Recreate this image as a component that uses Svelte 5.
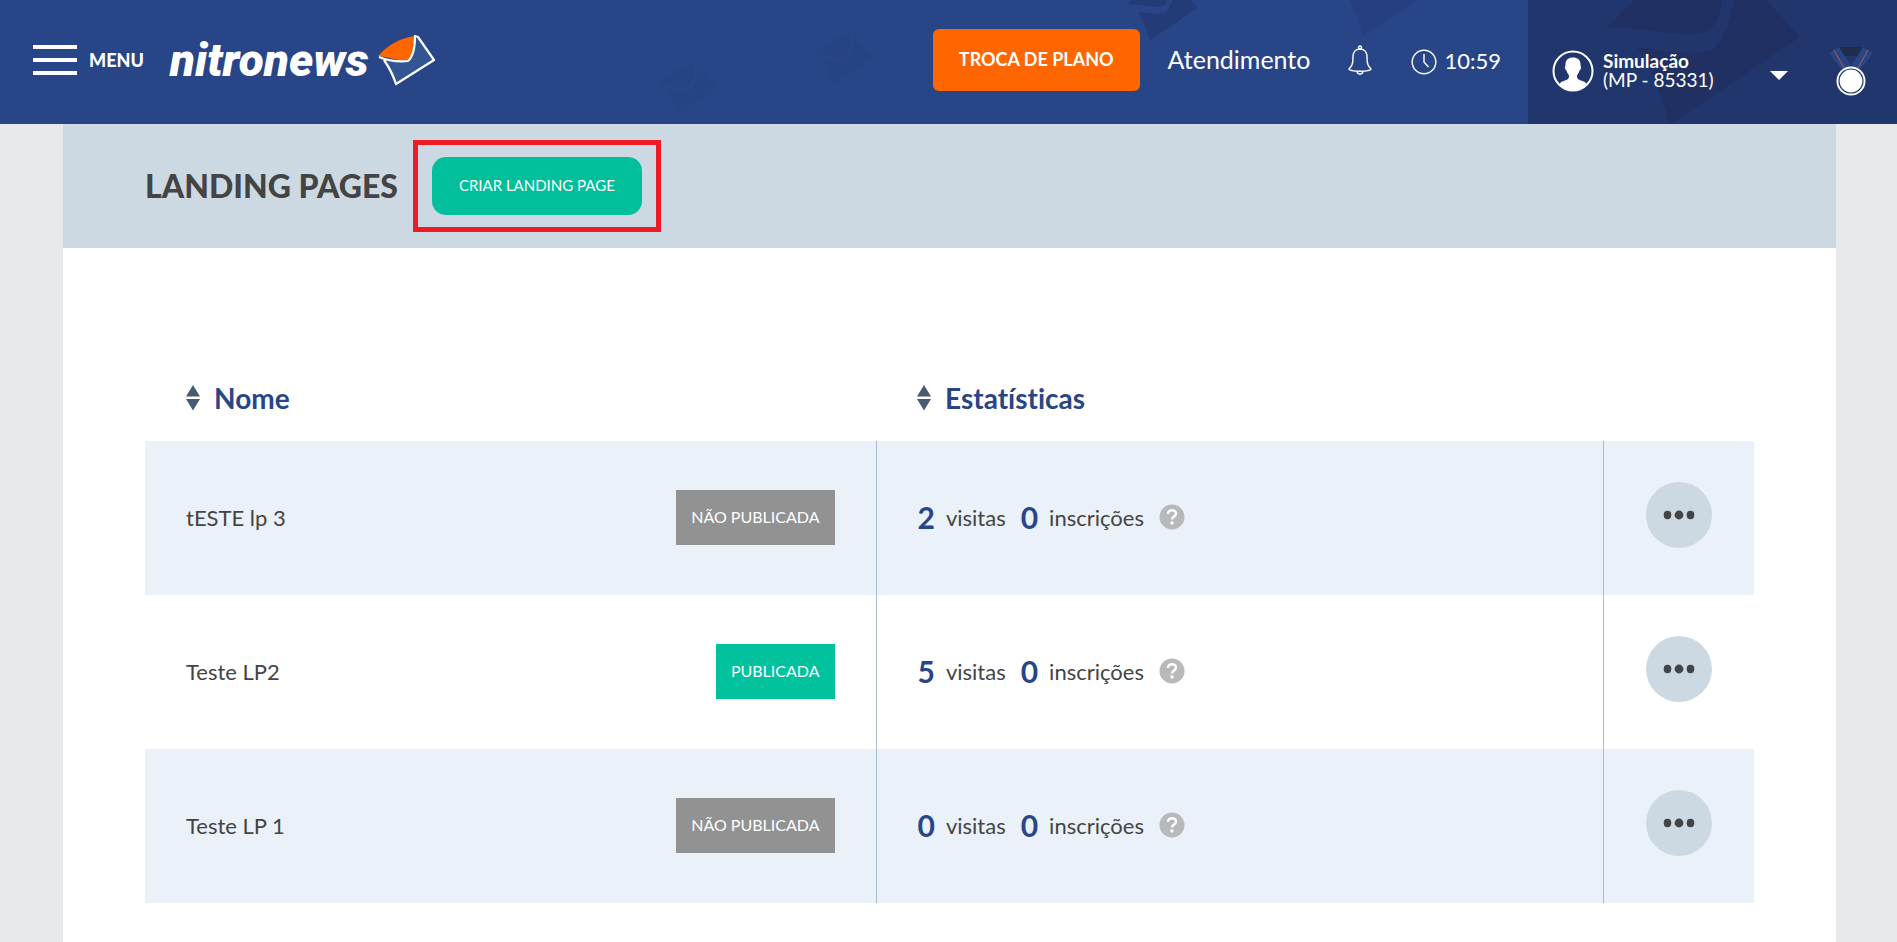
<script>
  const pages = [
    { name: 'tESTE lp 3', published: false, visits: 2, signups: 0 },
    { name: 'Teste LP2', published: true, visits: 5, signups: 0 },
    { name: 'Teste LP 1', published: false, visits: 0, signups: 0 }
  ];
</script>

{#snippet sortIcon()}
  <svg class="sort" viewBox="0 0 14 26" aria-hidden="true">
    <path d="M7 0l7 11.500H0zM7 25.500l7-11.500H0z" fill="#475c73" />
  </svg>
{/snippet}

<header class="topbar">
  <svg class="pattern" aria-hidden="true">
    <defs>
      <g id="envelope">
        <path d="M0 21C9 10 20 3 36 0c-1 9 0 18-5 22-6 3-18-1-31-1z" />
        <path d="M9 27c8 1 16 3 23 1 6-5 6-14 9-24l18 20-40 27C17 43 14 35 9 27z" />
      </g>
    </defs>
    <use href="#envelope" transform="translate(658 64)" fill="#243e7e" opacity=".25" />
    <use href="#envelope" transform="translate(814 34)" fill="#243e7e" opacity=".25" />
    <use href="#envelope" transform="translate(1127 -21) scale(1.2)" fill="#233c78" />
    <use href="#envelope" transform="translate(1327 -61) scale(1.9)" fill="#263f80" />
  </svg>

  <div class="brand">
    <button class="menu">
      <span class="bars"><i></i><i></i><i></i></span>
      MENU
    </button>
    <a class="logo" href="#inicio">
      <span>nitronews</span>
      <svg width="58" height="51" viewBox="0 0 58 51" aria-hidden="true">
        <path d="M3 24c5 8 11 15 15 25L56 24 39 2c-3 9-4 20-10 24-8 1-17-1-26-2z" fill="#335592" />
        <path d="M0 21C10 10 22 3 37 1c0 9-2 18-6 24-9 2-20-3-31-4z" fill="#f60" />
        <path d="M1 22c10 4 20 5 29 4 6-5 7-15 7-25l3 1 16 23-38 24C15 40 11 32 6 25" fill="none" stroke="#fff" stroke-width="2.200" stroke-linejoin="round" />
      </svg>
    </a>
  </div>

  <nav class="tools">
    <button class="plan">TROCA DE PLANO</button>
    <a class="support" href="#atendimento">Atendimento</a>
    <button class="bell" aria-label="Notificações">
      <svg width="24" height="30" viewBox="0 0 24 30" fill="none" stroke="#fff" stroke-width="1.400">
        <circle cx="12" cy="2.500" r="1.500" />
        <path d="M12 4c-5 0-7 4-7 8 0 7-1 9-4 12 1 3 21 3 22 0-3-3-4-5-4-12 0-4-2-8-7-8z" />
        <path d="M9 26c0 4 6 4 6 0" />
      </svg>
    </button>
    <span class="time">
      <svg width="26" height="26" viewBox="0 0 26 26" fill="none" stroke="#fff" stroke-width="1.400">
        <circle cx="13" cy="13" r="11.800" />
        <path d="M13 5v8l4.500 5" />
      </svg>
      <span>10:59</span>
    </span>
  </nav>

  <div class="account">
    <svg class="pattern" aria-hidden="true">
      <use href="#envelope" transform="translate(80 -41) scale(3.250)" fill="#203063" />
    </svg>
    <button class="user">
      <svg width="42" height="42" viewBox="0 0 42 42" aria-hidden="true">
        <circle cx="21" cy="21" r="19.500" fill="none" stroke="#fff" stroke-width="2" />
        <path d="M21 7.500c-5 0-8 3-7.500 8-1 1-.5 4 1 5 1 3 2 4 2.500 5 .3 3-1 4-4 5-3 .8-5 2-6 4a19 19 0 0 0 28 0c-1-2-3-3.200-6-4-3-1-4.300-2-4-5 .5-1 1.500-2 2.500-5 1.500-1 2-4 1-5 .5-5-2.500-8-7.500-8z" fill="#fff" />
      </svg>
      <span class="who"><b>Simulação</b><span>(MP - 85331)</span></span>
      <svg class="caret" width="18" height="9" viewBox="0 0 18 9" aria-hidden="true"><path d="M0 0h18L9 9z" fill="#fff" /></svg>
    </button>
    <svg class="medal" width="44" height="49" viewBox="0 0 44 49" aria-hidden="true">
      <path d="M9 0h26l-5 9H14z" fill="#1f2c4c" />
      <path d="M0 6l10-6 12 19-8 5zM44 6L34 0 22 19l8 5z" fill="#284587" />
      <path d="M5 3l10 18M39 3L29 21" stroke="#9c5549" stroke-width="1.200" />
      <circle cx="22" cy="34" r="14.500" fill="#fff" />
      <circle cx="22" cy="34" r="12" fill="none" stroke="#20366d" stroke-width="1.200" />
    </svg>
  </div>
</header>

<main>
  <div class="titlebar">
    <h1>LANDING PAGES</h1>
    <div class="highlight"><button class="create">CRIAR LANDING PAGE</button></div>
  </div>

  <div class="content">
    <table>
      <colgroup><col class="c-name" /><col /><col class="c-actions" /></colgroup>
      <thead>
        <tr>
          <th><button class="head">{@render sortIcon()}Nome</button></th>
          <th><button class="head">{@render sortIcon()}Estatísticas</button></th>
          <td></td>
        </tr>
      </thead>
      <tbody>
        {#each pages as page}
          <tr>
            <td>
              <div class="name">
                <span>{page.name}</span>
                <span class="badge" class:published={page.published}>
                  {page.published ? 'PUBLICADA' : 'NÃO PUBLICADA'}
                </span>
              </div>
            </td>
            <td>
              <div class="stats">
                <b>{page.visits}</b><span>visitas</span>
                <b>{page.signups}</b><span>inscrições</span>
                <button class="help" aria-label="Ajuda">
                  <svg width="26" height="26" viewBox="0 0 26 26">
                    <circle cx="13" cy="13" r="12.500" fill="#b8b9ba" />
                    <path d="M9 10c0-5 8-5 8-.5 0 3-4 3-4 6" fill="none" stroke="#fff" stroke-width="2.400" />
                    <circle cx="13" cy="19" r="1.700" fill="#fff" />
                  </svg>
                </button>
              </div>
            </td>
            <td class="actions">
              <button class="more" aria-label="Opções">
                <svg width="32" height="10" viewBox="0 0 32 10" fill="#444">
                  <ellipse cx="4.500" cy="5" rx="3.800" ry="4.200" /><circle cx="16" cy="5" r="4.400" /><ellipse cx="27.500" cy="5" rx="3.800" ry="4.200" />
                </svg>
              </button>
            </td>
          </tr>
        {/each}
      </tbody>
    </table>
  </div>
</main>

<style>
  :global(body) {
    background: #e6eaed;
    font-family: Lato, sans-serif;
    font-variant-ligatures: none;
    color: #444;
  }
  :global(#app) {
    display: flex;
    flex-direction: column;
    min-height: 100vh;
  }
  button {
    border: 0;
    padding: 0;
    background: none;
    color: inherit;
    font: inherit;
    cursor: pointer;
  }
  a {
    color: inherit;
    text-decoration: none;
  }
  svg {
    display: block;
    flex: none;
  }
  .topbar {
    position: relative;
    display: flex;
    height: 124px;
    background: #284587;
    color: #fff;
  }
  .pattern {
    position: absolute;
    inset: 0;
    width: 100%;
    height: 100%;
    pointer-events: none;
  }
  .brand,
  .tools {
    position: relative;
    display: flex;
    align-items: center;
    height: 120px;
  }
  .brand {
    padding-left: 33px;
    gap: 26px;
  }
  .menu {
    display: flex;
    align-items: center;
    gap: 12px;
    font-size: 18px;
    font-weight: 900;
  }
  .bars {
    display: grid;
    gap: 9px;
    width: 44px;
  }
  .bars i {
    height: 4px;
    background: #fff;
  }
  .logo {
    display: flex;
    align-items: center;
    gap: 9px;
    font: italic 900 46px/50px Roboto, sans-serif;
  }
  .tools {
    margin-left: auto;
    padding-right: 27px;
  }
  .plan {
    height: 62px;
    padding: 0 26px 2px;
    border-radius: 6px;
    background: #f60;
    font-size: 18px;
    font-weight: 700;
  }
  .support {
    margin: 0 38px 0 28px;
    padding-bottom: 2px;
    font-size: 25px;
  }
  .time {
    display: flex;
    align-items: center;
    gap: 7px;
    margin-left: 39px;
    padding-top: 4px;
    font-size: 22px;
  }
  .time span {
    padding-bottom: 4px;
  }
  .account {
    position: relative;
    display: flex;
    align-items: center;
    justify-content: space-between;
    box-sizing: border-box;
    width: 369px;
    padding: 18px 24px 0;
    background: #20366d;
  }
  .user {
    position: relative;
    display: flex;
    align-items: center;
    width: 236px;
    text-align: left;
  }
  .who {
    display: grid;
    margin-left: 9px;
    padding-bottom: 2px;
    font-size: 19px;
    line-height: 19px;
  }
  .caret {
    margin: 8px 0 0 auto;
  }
  .medal {
    position: relative;
  }
  main {
    flex: 1;
    margin: 0 61px 0 63px;
    background: #fff;
  }
  .titlebar {
    display: flex;
    align-items: center;
    gap: 15px;
    height: 124px;
    padding-left: 82px;
    background: #cdd9e2;
  }
  h1 {
    margin: 0;
    padding-bottom: 2px;
    font-size: 32px;
    font-weight: 900;
  }
  .highlight {
    padding: 12px 14px;
    border: 5px solid #ed1c24;
  }
  .create {
    display: block;
    height: 58px;
    padding: 0 27px 2px;
    border-radius: 14px;
    background: #00bf9a;
    color: #fff;
    font-size: 15px;
  }
  .content {
    padding: 107px 82px 40px;
  }
  table {
    width: 100%;
    table-layout: fixed;
    border-collapse: collapse;
  }
  .c-name {
    width: 731px;
  }
  .c-actions {
    width: 151px;
  }
  th,
  td {
    padding: 0 41px;
    text-align: left;
  }
  th {
    height: 86px;
  }
  .head {
    display: flex;
    align-items: center;
    gap: 14px;
    color: #284587;
    font-size: 28px;
    font-weight: 700;
  }
  .sort {
    width: 14px;
    height: 26px;
  }
  tbody td {
    box-sizing: border-box;
    height: 154px;
    padding-bottom: 2px;
    font-size: 22px;
  }
  tbody td:not(:last-child) {
    border-right: 1px solid #a9bccb;
  }
  tbody tr:nth-child(odd) {
    background: #eaf1f8;
  }
  .name,
  .stats {
    display: flex;
    align-items: center;
  }
  .name {
    justify-content: space-between;
  }
  .badge {
    box-sizing: border-box;
    height: 55px;
    padding: 0 15px;
    background: #929292;
    color: #fff;
    font-size: 16px;
    line-height: 53px;
  }
  .badge.published {
    background: #00c29d;
  }
  .stats {
    gap: 11px;
  }
  .stats span {
    margin-right: 4px;
  }
  .stats b {
    color: #284587;
    font-size: 30px;
  }
  tbody .actions {
    padding-bottom: 6px;
    text-align: center;
  }
  .more {
    display: inline-grid;
    place-items: center;
    width: 66px;
    height: 66px;
    border-radius: 50%;
    background: #cdd9e2;
  }
</style>
